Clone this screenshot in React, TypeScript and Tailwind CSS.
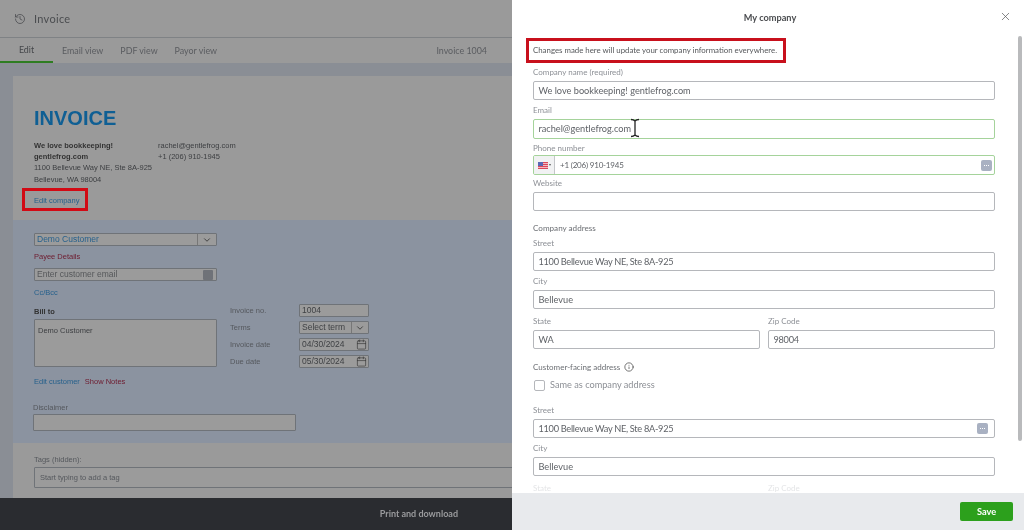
import React from "react";
import { History, X, ChevronDown, Calendar, Info } from "lucide-react";

const drawerFont = { fontFamily: 'Lato, "Open Sans", sans-serif' };

function Dots({ className }: { className: string }) {
  return (
    <span className={`flex items-center justify-center gap-px rounded-[2px] bg-[#a9b1c2] ${className}`}>
      <span className="h-px w-px bg-white" />
      <span className="h-px w-px bg-white" />
      <span className="h-px w-px bg-white" />
    </span>
  );
}

function Field({ label, value, className = "", icon, tight }: { label: string; value?: string; className?: string; icon?: boolean; tight?: boolean }) {
  return (
    <div className={className}>
      <div className="h-[11px] text-[8px] leading-[11px] text-[#8d9096]">{label}</div>
      <div className="mt-[3px] flex h-[19px] items-center rounded-[2px] border border-[#b5b7bb] bg-white pl-[4.5px] pr-[3px] text-[9.2px] text-[#5f6267]">
        <span className={tight ? "flex-1 tracking-[-0.28px]" : "flex-1"}>{value}</span>
        {icon && <Dots className="mr-[3px] h-[11px] w-[11px]" />}
      </div>
    </div>
  );
}

function SmallInput({ value, icon }: { value: string; icon?: "calendar" | "chevron" }) {
  return (
    <div className="flex h-[13px] w-[70px] items-center rounded-[1px] border border-[#6f7378] bg-[#9b9b9b] pl-[2px] text-[8.5px] text-[#3f4144]">
      <span className="flex-1">{value}</span>
      {icon === "calendar" && <Calendar size={11} strokeWidth={1.4} className="mr-[1px] text-[#333]" />}
      {icon === "chevron" && (
        <span className="flex h-full w-[17px] items-center justify-center border-l border-[#777]">
          <ChevronDown size={10} className="text-[#333]" />
        </span>
      )}
    </div>
  );
}

function InvoicePane() {
  return (
    <div className="flex h-[530px] w-[512px] shrink-0 flex-col overflow-hidden bg-[#8a8e95]" style={{ fontFamily: '"Liberation Sans", Arial, sans-serif' }}>
      <div className="flex h-[38px] shrink-0 items-center border-b border-[#7f8285] bg-[#9a9a9a] pl-[14px] pt-[1px] text-[#4b4d50]">
        <History size={12} strokeWidth={1.6} />
        <span className="ml-[8px] text-[11px] tracking-[0.3px]" style={drawerFont}>Invoice</span>
      </div>
      <div className="flex h-[25px] shrink-0 items-center bg-[#9a9a9a] text-[8.9px] text-[#5a5c60]" style={drawerFont}>
        <div className="flex h-full w-[53px] items-center justify-center border-b-2 border-[#2e7d22] text-[#44464a]">Edit</div>
        <span className="ml-[9px]">Email view</span>
        <span className="ml-[17px]">PDF view</span>
        <span className="ml-[17px]">Payor view</span>
        <span className="ml-auto mr-[25px]">Invoice 1004</span>
      </div>
      <div className="ml-[13px] mt-[13px] flex w-[520px] flex-1 flex-col bg-[#9a9a9a]">
        <div className="relative h-[144px] pl-[21px] pt-[30px]">
          <div className="text-[20px] font-bold leading-[24px] text-[#0f5f94]">INVOICE</div>
          <div className="mt-[10px] flex whitespace-nowrap text-[7.5px] leading-[11.2px] text-[#3c3e41]">
            <div className="w-[124px]">
              <div className="font-bold text-[#333]">We love bookkeeping!</div>
              <div className="font-bold text-[#333]">gentlefrog.com</div>
              <div>1100 Bellevue Way NE, Ste 8A-925</div>
              <div>Bellevue, WA 98004</div>
            </div>
            <div>
              <div>rachel@gentlefrog.com</div>
              <div>+1 (206) 910-1945</div>
            </div>
          </div>
          <div className="mt-[10px] text-[7.5px] leading-[11px] text-[#27618c]">Edit company</div>
          <div className="absolute left-[9px] top-[112px] h-[23px] w-[66px] border-[3px] border-[#d20a14]" />
        </div>
        <div className="h-[223px] bg-[#8b93a0] pl-[21px] pt-[13px]">
          <div className="flex h-[13px] w-[183px] items-center rounded-[1px] border border-[#6f7378] bg-[#9b9b9b] pl-[2px] text-[8.5px] text-[#27618c]">
            <span className="flex-1">Demo Customer</span>
            <span className="flex h-full w-[19px] items-center justify-center border-l border-[#777]">
              <ChevronDown size={10} className="text-[#333]" />
            </span>
          </div>
          <div className="mt-[5px] text-[7.5px] leading-[11px] text-[#6e1a2e]">Payee Details</div>
          <div className="mt-[6px] flex h-[13px] w-[183px] items-center rounded-[1px] border border-[#6f7378] bg-[#9b9b9b] pl-[2px] pr-[3px] text-[8.5px] text-[#55575a]">
            <span className="flex-1">Enter customer email</span>
            <span className="h-[10px] w-[10px] rounded-[1px] bg-[#6f7278]" />
          </div>
          <div className="mt-[6px] text-[7.5px] leading-[11px] text-[#27618c]">Cc/Bcc</div>
          <div className="flex">
            <div className="w-[196px] pt-[8px]">
              <div className="text-[7.5px] font-bold leading-[11px] text-[#333]">Bill to</div>
              <div className="mt-[2px] h-[48px] w-[183px] rounded-[1px] border border-[#6f7378] bg-[#9b9b9b] px-[3px] pt-[5px] text-[7.5px] leading-[11px] text-[#3c3e41]">
                Demo Customer
              </div>
            </div>
            <div className="flex flex-col gap-[4px] pt-[6px] text-[7.5px] text-[#55585d]">
              {[
                { label: "Invoice no.", value: "1004" },
                { label: "Terms", value: "Select term", icon: "chevron" as const },
                { label: "Invoice date", value: "04/30/2024", icon: "calendar" as const },
                { label: "Due date", value: "05/30/2024", icon: "calendar" as const },
              ].map((row) => (
                <div key={row.label} className="flex items-center">
                  <span className="w-[69px]">{row.label}</span>
                  <SmallInput value={row.value} icon={row.icon} />
                </div>
              ))}
            </div>
          </div>
          <div className="mt-[8px] flex gap-[5px] text-[7.5px] leading-[11px]">
            <span className="text-[#27618c]">Edit customer</span>
            <span className="text-[#6e1a2e]">Show Notes</span>
          </div>
          <div className="-ml-[1px] mt-[15px] text-[7.5px] leading-[11px] text-[#55585d]">Disclaimer</div>
          <div className="-ml-[1px] mt-[1px] h-[17px] w-[263px] rounded-[1px] border border-[#6f7378] bg-[#9b9b9b]" />
        </div>
        <div className="pl-[21px] pt-[11px]">
          <div className="text-[7.5px] leading-[11px] text-[#55585d]">Tags (hidden):</div>
          <div className="mt-[2px] flex h-[21px] items-center rounded-[1px] border border-[#6f7378] bg-[#9b9b9b] pl-[5px] text-[7.5px] text-[#55585d]">
            Start typing to add a tag
          </div>
        </div>
      </div>
      <div className="flex h-[32px] shrink-0 items-center justify-end bg-[#2a2c30] pr-[54px] text-[9px] font-bold text-[#9a9b9d]" style={drawerFont}>
        Print and download
      </div>
    </div>
  );
}

function CompanyDrawer() {
  return (
    <div className="relative flex h-[530px] w-[512px] shrink-0 flex-col overflow-hidden bg-white" style={drawerFont}>
      <div className="relative flex h-[36px] shrink-0 items-center justify-center pl-[4px] text-[9.2px] font-bold text-[#4b4d50]">
        My company
        <X size={13} strokeWidth={1.3} className="absolute right-[12px] top-[10px] text-[#55575a]" />
      </div>
      <div className="relative flex-1 overflow-hidden pl-[21px] pr-[29px]">
        <div className="relative h-[27px] pt-[8.5px] text-[7.85px] leading-[11px] text-[#55575a]">
          Changes made here will update your company information everywhere.
        </div>
        <Field label="Company name (required)" value="We love bookkeeping! gentlefrog.com" className="mt-[4px]" />
        <div className="mt-[5px]">
          <div className="h-[11px] text-[8px] leading-[11px] text-[#8d9096]">Email</div>
          <div className="relative mt-[3px] flex h-[20px] items-center rounded-[2px] border border-[#a5d39b] bg-white pl-[4.5px] text-[9.2px] text-[#5f6267]">
            rachel@gentlefrog.com
            <svg width="12" height="20" viewBox="0 0 12 20" className="absolute left-[95px] top-[-2px]">
              <path d="M2 1.5c2 0 3 .5 4 1.5 1-1 2-1.5 4-1.5M6 3v14M2 18.5c2 0 3-.5 4-1.5 1 1 2 1.5 4 1.5" fill="none" stroke="#222" strokeWidth="1.3" />
            </svg>
          </div>
        </div>
        <div className="mt-[4px]">
          <div className="h-[11px] text-[8px] leading-[11px] text-[#8d9096]">Phone number</div>
          <div className="mt-[1px] flex h-[20px] items-center overflow-hidden rounded-[2px] border border-[#a5d39b] bg-white text-[8px] text-[#5f6267]">
            <div className="flex h-full w-[21px] items-center justify-center gap-[1px] border-r border-[#c4c6c9] bg-[#f1f2f3]">
              <svg width="10" height="7" viewBox="0 0 10 7">
                <rect width="10" height="7" fill="#d9475a" />
                <rect y="1" width="10" height="1" fill="#f3b9c0" />
                <rect y="3" width="10" height="1" fill="#f3b9c0" />
                <rect y="5" width="10" height="1" fill="#f3b9c0" />
                <rect width="5" height="4" fill="#5a68b4" />
              </svg>
              <span className="h-0 w-0 border-x-[1.5px] border-t-[2px] border-x-transparent border-t-[#55575a]" />
            </div>
            <span className="ml-[5px] flex-1 tracking-[-0.2px]">+1 (206) 910-1945</span>
            <Dots className="mr-[2px] h-[11px] w-[11px]" />
          </div>
        </div>
        <Field label="Website" className="mt-[3px]" />
        <div className="mt-[12px] h-[11px] text-[8.1px] leading-[11px] text-[#6b6e73]">Company address</div>
        <Field label="Street" value="1100 Bellevue Way NE, Ste 8A-925" className="mt-[4px]" tight />
        <Field label="City" value="Bellevue" className="mt-[5px]" />
        <div className="mt-[7px] flex gap-[8px]">
          <Field label="State" value="WA" className="flex-1" />
          <Field label="Zip Code" value="98004" className="flex-1" tight />
        </div>
        <div className="mt-[12px] flex h-[11px] items-center gap-[4px] text-[8px] text-[#6b6e73]">
          Customer-facing address
          <Info size={10} strokeWidth={1.6} className="text-[#333]" />
        </div>
        <div className="mt-[7px] flex h-[12px] items-center gap-[5px] pl-[1px] text-[9.2px] text-[#8d9096]">
          <span className="h-[11px] w-[11px] rounded-[2px] border border-[#b5b7bb]" />
          Same as company address
        </div>
        <Field label="Street" value="1100 Bellevue Way NE, Ste 8A-925" className="mt-[14px]" icon tight />
        <Field label="City" value="Bellevue" className="mt-[5px]" />
        <div className="mt-[7px] flex gap-[8px] text-[#e4e5e7]">
          <div className="h-[11px] flex-1 text-[8px] leading-[11px]">State</div>
          <div className="h-[11px] flex-1 text-[8px] leading-[11px]">Zip Code</div>
        </div>
        <div className="absolute left-[14px] top-[2px] h-[25px] w-[260px] border-[3px] border-[#c8101c]" />
        <div className="absolute left-[506px] top-0 h-[405px] w-[4px] rounded-full bg-[#b9babc]" />
      </div>
      <div className="flex h-[37px] shrink-0 items-center justify-end bg-[#e8eaed] pr-[11px]">
        <div className="flex h-[19px] w-[53px] items-center justify-center rounded-[2px] bg-[#2ca01c] text-[9.2px] font-bold text-white">
          Save
        </div>
      </div>
    </div>
  );
}

export default function App() {
  return (
    <div className="flex h-[530px] w-[1024px] overflow-hidden blur-[0.3px]">
      <InvoicePane />
      <CompanyDrawer />
    </div>
  );
}
